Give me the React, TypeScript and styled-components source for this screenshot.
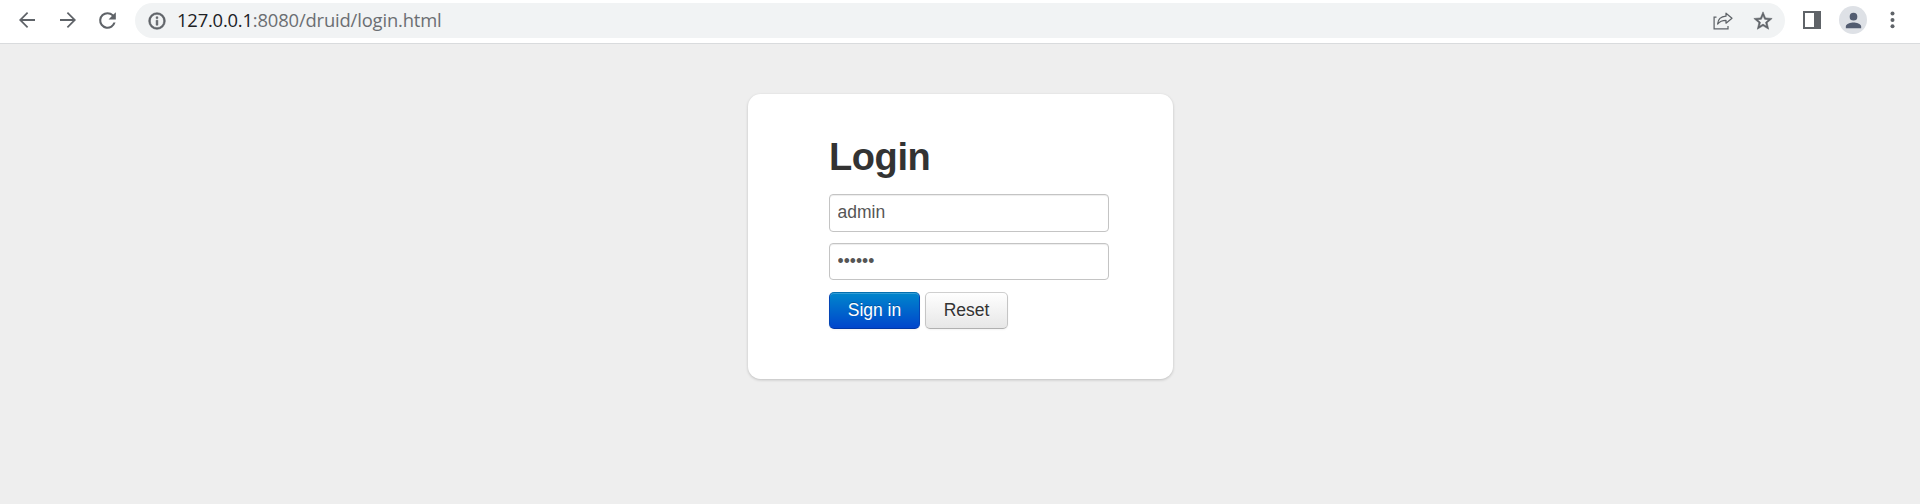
import React from "react";
import styled, { createGlobalStyle } from "styled-components";

const GlobalStyle = createGlobalStyle`
  * { box-sizing: border-box; }
  body {
    margin: 0;
    background: #eeeeee;
    font-family: "Liberation Sans", Arial, sans-serif;
    color: #333333;
  }
`;

const Page = styled.div`
  min-height: 504px;
  background: #eeeeee;
`;

const Toolbar = styled.header`
  display: flex;
  align-items: flex-start;
  height: 44px;
  padding-left: 15px;
  background: #ffffff;
  border-bottom: 1px solid #d9dbdd;
`;

const ToolIcon = styled.span<{ $w: number; $gap?: number }>`
  display: flex;
  align-items: center;
  justify-content: center;
  flex: none;
  width: ${(p) => p.$w}px;
  height: 40px;
  margin-left: ${(p) => p.$gap ?? 0}px;
  color: #5f6368;
  svg { display: block; fill: currentColor; }
`;

const AddressBar = styled.div`
  display: flex;
  align-items: center;
  flex: none;
  width: 1650px;
  height: 35px;
  margin: 3px 0 0 15px;
  padding: 0 11px 0 12px;
  border-radius: 18px;
  background: #f1f3f4;
  color: #5f6368;
  svg { display: block; flex: none; fill: currentColor; }
`;

const Url = styled.span`
  flex: 1;
  margin-left: 10px;
  padding-bottom: 2px;
  font: 18.4px/33px "Open Sans", "Noto Sans", sans-serif;
  letter-spacing: -0.16px;
  white-space: nowrap;
  color: #6b6e72;
`;

const Host = styled.span`
  letter-spacing: -0.2px;
  color: #202124;
`;

const BarIcons = styled.span`
  display: flex;
  align-items: center;
  gap: 19px;
`;

const Avatar = styled.span`
  display: flex;
  align-items: center;
  justify-content: center;
  width: 28px;
  height: 28px;
  border-radius: 50%;
  background: #dee1e6;
  color: #525c70;
`;

const Card = styled.main`
  width: 425px;
  height: 285px;
  margin: 50px 0 0 748px;
  padding: 38px 64px 0 81px;
  border-radius: 12.5px;
  background: #ffffff;
  box-shadow: 0 1px 3px rgba(0, 0, 0, 0.2);
`;

const Title = styled.h2`
  margin: 0 0 12px;
  font-size: 38px;
  line-height: 50px;
  font-weight: 700;
  letter-spacing: -0.4px;
`;

const Field = styled.input<{ $h: number; $after: number; $lift: number }>`
  display: block;
  width: 280px;
  height: ${(p) => p.$h}px;
  margin: 0 0 ${(p) => p.$after}px;
  padding: 0 7.5px ${(p) => p.$lift}px;
  border: 1px solid #c4c4c4;
  border-radius: 4px;
  outline: 0;
  background: #ffffff;
  box-shadow: inset 0 1px 1px rgba(0, 0, 0, 0.075);
  font: 17.5px/25px "Liberation Sans", Arial, sans-serif;
  color: #555555;
`;

const Actions = styled.div`
  display: flex;
  gap: 5px;
`;

const Button = styled.button<{ $primary?: boolean }>`
  width: ${(p) => (p.$primary ? 91 : 83)}px;
  height: 37px;
  padding: 0;
  border: 1px solid;
  border-radius: 5px;
  border-color: ${(p) =>
    p.$primary ? "#0470b0 #0445b5 #0037a5" : "#cfcfcf #c5c5c5 #b0b0b0"};
  background: ${(p) =>
    p.$primary
      ? "linear-gradient(#0088cc, #0044cc) border-box"
      : "linear-gradient(#ffffff, #e6e6e6) border-box"};
  box-shadow: inset 0 1px 0 rgba(255, 255, 255, 0.2), 0 1px 2px rgba(0, 0, 0, 0.05);
  color: ${(p) => (p.$primary ? "#ffffff" : "#333333")};
  text-shadow: ${(p) =>
    p.$primary ? "0 -1px 0 rgba(0,0,0,0.25)" : "0 1px 1px rgba(255,255,255,0.75)"};
  font: 17.5px/25px "Liberation Sans", Arial, sans-serif;
`;

type IconProps = { d: string; size: number; bold?: number };
const Icon = ({ d, size, bold = 0 }: IconProps) => (
  <svg width={size} height={size} viewBox="0 0 24 24" aria-hidden="true">
    <path d={d} stroke="currentColor" strokeWidth={bold} />
  </svg>
);

const BACK = "M20 11.1H7.5l5.7-5.8L12 4l-8 8 8 8 1.2-1.3-5.7-5.8H20z";
const FORWARD = "M4 11.1h12.5l-5.7-5.8L12 4l8 8-8 8-1.2-1.3 5.7-5.8H4z";
const RELOAD =
  "M17.65 6.35A7.96 7.96 0 0 0 12 4a8 8 0 1 0 7.73 10h-2.08A6 6 0 1 1 12 6c1.66 0 3.14.69 4.22 1.78L13 11h7V4z";
const INFO =
  "M11 7h2v2h-2zm0 4h2v6h-2zm1-9a10 10 0 1 0 0 20 10 10 0 0 0 0-20zm0 18a8 8 0 1 1 0-16 8 8 0 0 1 0 16z";
const STAR =
  "M22 9.24l-7.19-.62L12 2 9.19 8.63 2 9.24l5.46 4.73L5.82 21 12 17.27 18.18 21l-1.63-7.03zM12 15.4l-3.76 2.27 1-4.28-3.32-2.88 4.38-.38L12 6.1l1.71 4.04 4.38.38-3.32 2.88 1 4.28z";
const PERSON =
  "M12 12a4 4 0 1 0 0-8 4 4 0 0 0 0 8zm0 2c-2.67 0-8 1.34-8 4v2h16v-2c0-2.66-5.33-4-8-4z";

export default function App() {
  return (
    <Page>
      <GlobalStyle />
      <Toolbar>
        <ToolIcon $w={24}><Icon d={BACK} size={24} /></ToolIcon>
        <ToolIcon $w={24} $gap={17}><Icon d={FORWARD} size={24} /></ToolIcon>
        <ToolIcon $w={25} $gap={15}><Icon d={RELOAD} size={25} /></ToolIcon>
        <AddressBar>
          <Icon d={INFO} size={20} bold={0.7} />
          <Url><Host>127.0.0.1</Host>:8080/druid/login.html</Url>
          <BarIcons>
            <svg width="20" height="18" viewBox="0 0 20 18" aria-hidden="true">
              <g fill="none" stroke="currentColor" strokeWidth="1.25">
                <path d="M3.5 5H1.1v11.9H15V14" />
                <path d="M13 1.2l6 5-6 5V8.3c-3.8 0-6.3 1-8.4 3.7.3-4.4 3.6-7.4 8.4-7.8z" strokeLinejoin="round" />
              </g>
            </svg>
            <Icon d={STAR} size={22} bold={0.6} />
          </BarIcons>
        </AddressBar>
        <ToolIcon $w={18} $gap={18}>
          <svg width="18" height="18" viewBox="0 0 18 18" aria-hidden="true">
            <path fillRule="evenodd" d="M0 0h18v18H0zM2 2v14h9V2z" />
          </svg>
        </ToolIcon>
        <ToolIcon $w={28} $gap={18}>
          <Avatar><Icon d={PERSON} size={23} /></Avatar>
        </ToolIcon>
        <ToolIcon $w={5} $gap={23}>
          <svg width="5" height="18" viewBox="0 0 5 18" aria-hidden="true">
            <circle cx="2.5" cy="2.5" r="2" />
            <circle cx="2.5" cy="9" r="2" />
            <circle cx="2.5" cy="15.3" r="2" />
          </svg>
        </ToolIcon>
      </Toolbar>
      <Card>
        <Title>Login</Title>
        <Field $h={38} $after={11} $lift={2} type="text" defaultValue="admin" aria-label="Username" />
        <Field $h={37} $after={12} $lift={0} type="password" defaultValue="123456" aria-label="Password" />
        <Actions>
          <Button $primary type="button">Sign in</Button>
          <Button type="button">Reset</Button>
        </Actions>
      </Card>
    </Page>
  );
}
